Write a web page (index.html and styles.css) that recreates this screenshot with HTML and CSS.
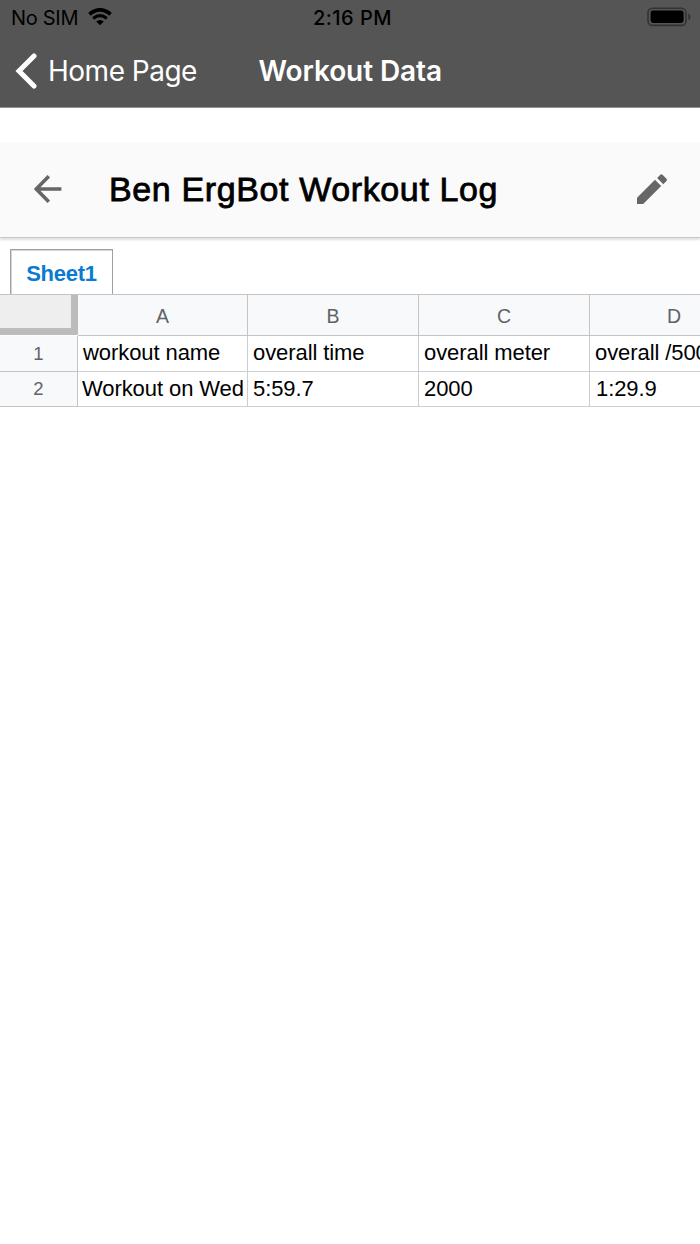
FILE: index.html
```html
<!DOCTYPE html>
<html lang="en">
<head>
<meta charset="utf-8">
<title>Workout Data</title>
<link rel="stylesheet" href="styles.css">
</head>
<body>
<header class="top">
  <div class="status">
    <div class="carrier"><span class="sim">No SIM</span>
      <svg class="wifi" width="24" height="18" viewBox="0 0 24 18"><path d="M1.4 6.2Q12-2.4 22.6 6.2" fill="none" stroke="#000" stroke-width="3.8"/><path d="M5.2 10.4Q12 4.8 18.8 10.4" fill="none" stroke="#000" stroke-width="3.3"/><path d="M8.2 13.5Q12 10.4 15.8 13.5L12 17.2Z"/></svg>
    </div>
    <span class="time">2:16 PM</span>
    <svg class="battery" width="44" height="20" viewBox="0 0 44 20"><rect x="1" y="1.2" width="38" height="17.2" rx="4.5" fill="none" stroke="#333" stroke-width="1.6"/><rect x="3.6" y="3.6" width="33" height="12.4" rx="2.4"/><path d="M41.4 6.5Q43.4 7.3 43.4 9.7T41.4 13Z" fill="#2f2f2f"/></svg>
  </div>
  <nav class="nav">
    <div class="back">
      <svg width="22" height="36" viewBox="0 0 22 36"><path d="M19 3L4 18L19 33" fill="none" stroke="#fff" stroke-width="5" stroke-linecap="round"/></svg>
      <span class="home">Home Page</span>
    </div>
    <span class="heading">Workout Data</span>
  </nav>
</header>
<section class="document">
  <svg class="arrow" width="28" height="28" viewBox="0 0 28 28"><path d="M14.8 1.2L2.2 14L14.8 26.8M2.4 14H27.4" fill="none" stroke="#666" stroke-width="3.6"/></svg>
  <h1 class="title">Ben ErgBot Workout Log</h1>
  <svg class="pencil" width="32" height="32" viewBox="0 0 32 32" fill="#666"><path d="M1 24.8L19 6.8L25.2 13L7.2 31H1Z"/><path d="M21.1 5L24.3 1.8Q25.4.7 26.5 1.8L30.5 5.8Q31.6 6.9 30.5 8L27.3 11.2Z"/></svg>
</section>
<div class="tabs"><div class="tab"><span class="tab-label">Sheet1</span></div></div>
<main class="sheet">
  <div class="corner"></div><div class="col">A</div><div class="col">B</div><div class="col">C</div><div class="col last">D</div>
  <div class="num">1</div><div class="cell">workout name</div><div class="cell">overall time</div><div class="cell">overall meter</div><div class="cell last">overall /500</div>
  <div class="num">2</div><div class="cell wide">Workout on Wed</div><div class="cell">5:59.7</div><div class="cell">2000</div><div class="cell last indent">1:29.9</div>
</main>
</body>
</html>
```
FILE: styles.css
```css
* { box-sizing: border-box; }
body { margin: 0; width: 700px; height: 1244px; overflow: hidden; background: #fff; font-family: "Liberation Sans", Arial, sans-serif; color: #000; }
svg { display: block; flex: none; }
.top { height: 108px; background: #555; border-bottom: 1px solid #929292; font-family: Inter, sans-serif; white-space: nowrap; }
.status { height: 36px; display: grid; grid-template-columns: 300px 1fr 300px; align-items: center; font-size: 20px; line-height: 36px; }
.carrier { display: flex; align-items: center; gap: 10px; padding-left: 11px; }
.sim { letter-spacing: -.3px; }
.wifi { margin-top: -2px; }
.time { text-align: center; font-weight: 500; letter-spacing: .5px; padding-left: 5px; }
.battery { justify-self: end; margin: -2px 9px 0 0; }
.nav { height: 70px; display: grid; grid-template-columns: 258.5px 1fr; align-items: center; color: #fff; font-size: 28px; line-height: 70px; }
.back { display: flex; align-items: center; gap: 11px; padding-left: 15px; }
.home { letter-spacing: -.5px; }
.heading { font-weight: 600; letter-spacing: -.1px; }
.document { margin-top: 34px; height: 96px; background: #fafafa; border-bottom: 1px solid #c7c7c7; box-shadow: 0 2px 2px rgba(0,0,0,.12); display: flex; align-items: center; padding: 0 32px 2px 34px; }
.title { margin: 0 auto 0 47px; font-size: 34px; font-weight: 400; line-height: 40px; letter-spacing: .62px; -webkit-text-stroke: .8px #000; white-space: nowrap; }
.tabs { height: 56px; padding: 11px 0 0 10px; }
.tab { width: 103px; height: 45px; border: 1px solid #a0a0a0; border-width: 1px 1px 0; text-align: center; font-size: 22px; font-weight: 700; line-height: 47px; color: #0a7bd0; box-shadow: inset 1px 0 #d5d5d5, inset 0 1px #d5d5d5; }
.tab-label { letter-spacing: -.25px; }
.sheet { display: grid; grid-template-columns: 78px 170px 171px 171px 110px; grid-template-rows: 41px 36px 35px; border-top: 1px solid #c4c4c4; overflow: hidden; }
.corner { background: #eee; border-right: 7px solid #bcbcbc; border-bottom: 7px solid #bcbcbc; height: 40px; }
.col, .num { background: #f8f9fa; color: #5f6368; display: flex; align-items: center; justify-content: center; font-size: 19.5px; border-right: 1px solid #c4c4c4; border-bottom: 1px solid #c4c4c4; }
.col { padding-top: 2px; }
.num { font-size: 18.5px; }
.cell { border-right: 1px solid #cdcdcd; border-bottom: 1px solid #cfcfcf; padding-left: 5px; font-size: 22px; line-height: 34px; letter-spacing: -.08px; white-space: nowrap; overflow: hidden; }
.wide { padding-left: 4px; }
.col.last { justify-content: flex-start; padding-left: 77px; border-right: 0; }
.cell.last { border-right: 0; }
.indent { padding-left: 6px; }
```
